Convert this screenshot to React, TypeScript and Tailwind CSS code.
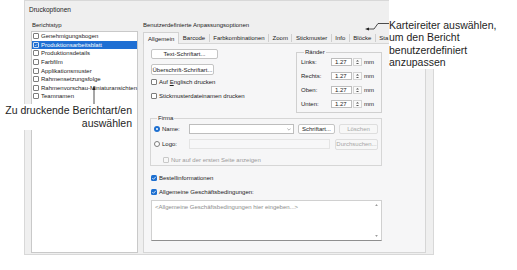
import React from "react";

const reportTypes = [
  "Genehmigungsbogen",
  "Produktionsarbeitsblatt",
  "Produktionsdetails",
  "Farbfilm",
  "Applikationsmuster",
  "Rahmensetzungsfolge",
  "Rahmenvorschau-Miniaturansichten",
  "Teamnamen",
];

const tabs = ["Barcode", "Farbkombinationen", "Zoom", "Stickmuster", "Info", "Blöcke", "Sta"];

const margins = ["Links:", "Rechts:", "Oben:", "Unten:"];

function Check() {
  return (
    <svg viewBox="0 0 6 6" className="w-[6px] h-[6px]">
      <path d="M1.3 3.1 L2.5 4.3 L4.8 1.8" fill="none" stroke="#fff" strokeWidth="0.8" />
    </svg>
  );
}

function Box({ checked = false, disabled = false }: { checked?: boolean; disabled?: boolean }) {
  if (checked) {
    return (
      <span className="w-[6px] h-[6px] rounded-[1.5px] bg-[#1d6fd0] flex items-center justify-center shrink-0">
        <Check />
      </span>
    );
  }
  return (
    <span
      className={
        disabled
          ? "w-[6px] h-[6px] rounded-[1px] border border-[#c8c8c8] bg-[#f7f7f7] shrink-0"
          : "w-[6px] h-[6px] rounded-[1px] border border-[#7d7d7d] bg-white shrink-0"
      }
    />
  );
}

function Radio({ checked = false }: { checked?: boolean }) {
  if (checked) {
    return (
      <span className="w-[6px] h-[6px] rounded-full bg-[#1d6fd0] flex items-center justify-center shrink-0">
        <span className="w-[2.5px] h-[2.5px] rounded-full bg-white" />
      </span>
    );
  }
  return <span className="w-[6px] h-[6px] rounded-full border border-[#7d7d7d] bg-white shrink-0" />;
}

function Button({ label, className, disabled = false }: { label: string; className: string; disabled?: boolean }) {
  return (
    <div
      className={
        "flex items-center justify-center whitespace-nowrap rounded-[2px] border " +
        (disabled ? "border-[#dedede] bg-[#f7f7f7] text-[#a6a6a6] " : "border-[#c4c4c4] bg-white text-[#1b1b1b] ") +
        className
      }
    >
      {label}
    </div>
  );
}

function Spin() {
  return (
    <div className="flex h-[8px] w-[31px] items-stretch">
      <span className="flex flex-1 items-center border border-[#bdbdbd] bg-white pl-[3px]">1.27</span>
      <span className="ml-[1px] flex w-[9px] flex-col items-center justify-center gap-[1px] border border-[#d4d4d4] bg-[#fafafa]">
        <svg viewBox="0 0 4 2" className="w-[3px] h-[1.5px]">
          <path d="M0 2 L2 0 L4 2 Z" fill="#555" />
        </svg>
        <svg viewBox="0 0 4 2" className="w-[3px] h-[1.5px]">
          <path d="M0 0 L2 2 L4 0 Z" fill="#555" />
        </svg>
      </span>
    </div>
  );
}

export default function App() {
  return (
    <div className="relative w-[517px] h-[270px] bg-white overflow-hidden font-['Liberation_Sans',Arial,sans-serif]">
      {/* Dialog */}
      <div className="ml-[24px] flex h-[255px] w-[410px] flex-col border border-[#d8d8d8] bg-[#efefef] text-[6px] leading-[6px] text-[#1b1b1b]">
        <div className="h-[17px] pl-[4px] pt-[6px] text-[6.5px]">Druckoptionen</div>

        <div className="flex flex-1 gap-[5px] pb-[1px] pl-[6px] pr-[7px]">
          {/* Berichtstyp */}
          <div className="flex w-[107px] flex-col">
            <div className="h-[13px] pl-[1px] pt-[4px]">Berichtstyp</div>
            <div className="flex-1 border border-[#c9c9c9] bg-white">
              {reportTypes.map((name, i) =>
                i === 1 ? (
                  <div key={name} className="flex h-[8.6px] items-center gap-[2px] whitespace-nowrap bg-[#1f6fd3] pl-[1px] text-white">
                    <span className="flex w-[6px] h-[6px] items-center justify-center rounded-[1px] border border-[#cfe0f5]">
                      <Check />
                    </span>
                    {name}
                  </div>
                ) : (
                  <div key={name} className="flex h-[8.6px] items-center gap-[2px] whitespace-nowrap pl-[1px]">
                    <Box />
                    {name}
                  </div>
                )
              )}
            </div>
          </div>

          {/* Anpassungsoptionen */}
          <div className="flex flex-1 flex-col">
            <div className="h-[13px] pt-[4px]">Benutzerdefinierte Anpassungsoptionen</div>
            <div className="flex h-[12px] w-[245px] items-end">
              <div className="relative z-10 -mb-[1px] flex h-[12px] shrink-0 items-center border border-b-0 border-[#d2d2d2] bg-[#f6f6f7] px-[4px]">
                Allgemein
              </div>
              {tabs.map((t, i) => (
                <div key={t} className="flex h-[11px] shrink-0 items-center">
                  {i > 0 && <span className="h-[8px] w-px bg-[#cfcfcf]" />}
                  <span className={i === tabs.length - 1 ? "pl-[3.5px]" : "px-[3.5px]"}>{t}</span>
                </div>
              ))}
            </div>

            <div className="flex-1 border border-[#d6d6d6] bg-[#f6f6f7] pl-[7px] pt-[5px]">
              <div className="flex">
                <div className="flex w-[145px] flex-col">
                  <Button label="Text-Schriftart..." className="h-[10px] w-[67px]" />
                  <Button label="Überschrift-Schriftart..." className="mt-[5px] h-[11px] w-[63px]" />
                  <div className="mt-[3px] flex h-[8px] items-center gap-[2px]">
                    <Box />
                    <span>
                      Auf <span className="underline">E</span>nglisch drucken
                    </span>
                  </div>
                  <div className="mt-[6px] flex h-[8px] items-center gap-[2px]">
                    <Box />
                    Stickmusterdateinamen drucken
                  </div>
                </div>

                <fieldset className="h-[64px] w-[86px] border border-[#d0d0d0] pb-[4px] pl-[4px]">
                  <legend className="ml-[3px] px-[1px] leading-[6px]">Ränder</legend>
                  <div className="flex flex-col gap-[6px] pt-[3px]">
                    {margins.map((m) => (
                      <div key={m} className="flex h-[8px] items-center">
                        <span className="w-[30px]">{m}</span>
                        <Spin />
                        <span className="ml-[2px]">mm</span>
                      </div>
                    ))}
                  </div>
                </fieldset>
              </div>

              {/* Firma */}
              <fieldset className="-ml-[1px] mt-[2px] w-[232px] border border-[#d6d6d6] pb-[1px] pl-[3px] pr-[3px]">
                <legend className="ml-[3px] px-[1px] leading-[6px]">Firma</legend>
                <div className="mt-[3px] flex h-[10px] items-center">
                  <Radio checked />
                  <span className="ml-[2px] w-[27px]">Name:</span>
                  <div className="flex h-[10px] w-[105px] items-center justify-end border border-[#bdbdbd] bg-white pr-[2px]">
                    <svg viewBox="0 0 6 4" className="w-[4px] h-[3px]">
                      <path d="M0.5 0.5 L3 3 L5.5 0.5" fill="none" stroke="#777" strokeWidth="0.8" />
                    </svg>
                  </div>
                  <Button label="Schriftart..." className="ml-[4px] h-[10px] w-[37px]" />
                  <Button label="Löschen" disabled className="ml-[4px] h-[10px] w-[39px]" />
                </div>
                <div className="mt-[5px] flex h-[10px] items-center">
                  <Radio />
                  <span className="ml-[2px] w-[27px]">Logo:</span>
                  <div className="h-[10px] w-[141px] border border-[#e4e4e4] bg-[#f7f7f8]" />
                  <Button label="Durchsuchen..." disabled className="ml-[5px] h-[11px] w-[43px]" />
                </div>
                <div className="mt-[7px] flex h-[8px] items-center gap-[2px] pl-[9px] text-[#9a9a9a]">
                  <Box disabled />
                  Nur auf der ersten Seite anzeigen
                </div>
              </fieldset>

              <div className="mt-[8px] flex h-[8px] items-center gap-[2px]">
                <Box checked />
                Bestellinformationen
              </div>
              <div className="mt-[6px] flex h-[8px] items-center gap-[2px]">
                <Box checked />
                Allgemeine Geschäftsbedingungen:
              </div>
              <div className="mt-[4px] flex h-[41px] w-[231px] border border-[#d0d0d0] border-b-[#8f8f8f] bg-white">
                <div className="flex-1 pl-[3px] pt-[3px] text-[#8c8c8c]">
                  &lt;Allgemeine Geschäftsbedingungen hier eingeben...&gt;
                </div>
                <div className="flex w-[9px] flex-col items-center justify-between py-[3px]">
                  <svg viewBox="0 0 4 3" className="w-[3px] h-[2px]">
                    <path d="M0 3 L2 0 L4 3 Z" fill="#9a9a9a" />
                  </svg>
                  <svg viewBox="0 0 4 3" className="w-[3px] h-[2px]">
                    <path d="M0 0 L2 3 L4 0 Z" fill="#9a9a9a" />
                  </svg>
                </div>
              </div>
            </div>
          </div>
        </div>
      </div>

      {/* Callout: Berichtart */}
      <svg className="absolute left-[90px] top-[85px] w-[8px] h-[20px]" viewBox="0 0 8 20">
        <line x1="4" y1="20" x2="4" y2="2" stroke="#222" strokeWidth="0.8" />
        <path d="M4 1 L2.6 5 L5.4 5 Z" fill="#222" />
      </svg>
      <div className="absolute left-[2px] top-[104px] w-[130px] bg-white text-right text-[10.5px] leading-[13px] text-[#1e1e1e]">
        Zu druckende Berichtart/en
        <br />
        auswählen
      </div>

      {/* Callout: Karteireiter */}
      <div className="absolute left-[389px] top-[0px] h-[69px] w-[128px] bg-white pt-[19px] text-[10.5px] leading-[12.3px] text-[#1e1e1e]">
        Karteireiter auswählen,
        <br />
        um den Bericht
        <br />
        benutzerdefiniert
        <br />
        anzupassen
      </div>
      <svg className="absolute left-[362px] top-[20px] w-[27px] h-[12px]" viewBox="0 0 27 12">
        <polyline points="27,3.5 16,3.5 12,9 5,9" fill="none" stroke="#222" strokeWidth="0.8" />
        <path d="M3 9 L7 7.4 L7 10.6 Z" fill="#222" />
      </svg>
    </div>
  );
}
